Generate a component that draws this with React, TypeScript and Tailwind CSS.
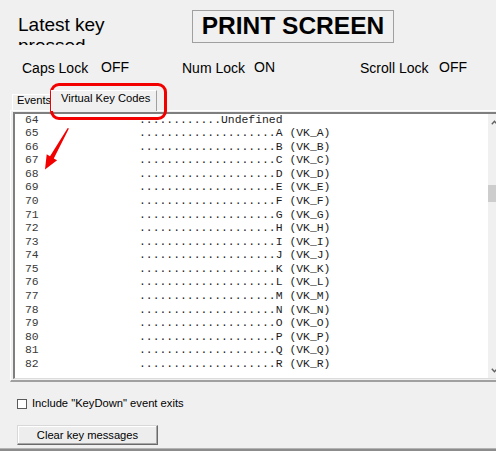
import React from "react";

type Row = { n: number; t: string };

const letters = "ABCDEFGHIJKLMNOPQR".split("");

const rows: Row[] = [
  { n: 64, t: "............Undefined" },
  ...letters.map((c, i) => ({
    n: 65 + i,
    t: "...................." + c + " (VK_" + c + ")",
  })),
];

function ChevronUp() {
  return (
    <svg width="7" height="5" viewBox="0 0 7 5">
      <path d="M0.8 4.2 L3.5 1.3 L6.2 4.2" fill="none" stroke="#606060" strokeWidth="1.4" />
    </svg>
  );
}

function ChevronDown() {
  return (
    <svg width="7" height="5" viewBox="0 0 7 5">
      <path d="M0.8 0.8 L3.5 3.7 L6.2 0.8" fill="none" stroke="#606060" strokeWidth="1.4" />
    </svg>
  );
}

export default function App() {
  return (
    <div className="relative w-[496px] h-[451px] overflow-hidden bg-[#f0f0f0] flex flex-col font-['Liberation_Sans',Arial,sans-serif] text-black">
      {/* header: last key label and big key name box */}
      <div className="flex h-[46px] shrink-0">
        <div className="ml-[18px] mt-[15px] w-[100px] h-[29.5px] overflow-hidden text-[19px] leading-[20.5px]">
          Latest key pressed
        </div>
        <div className="ml-[74px] mt-[10px] w-[202px] h-[33px] border border-[#a0a0a0] flex items-center justify-center">
          <span className="text-[24.5px] font-bold leading-none">PRINT SCREEN</span>
        </div>
      </div>

      {/* lock key states */}
      <div className="flex items-start mt-[13.5px] h-[16px] pl-[22px] text-[14px] leading-[16px] shrink-0">
        <span className="w-[79px]">Caps Lock</span>
        <span className="w-[81px] -mt-px">OFF</span>
        <span className="w-[72px]">Num Lock</span>
        <span className="w-[106px] -mt-px">ON</span>
        <span className="w-[79px]">Scroll Lock</span>
        <span className="-mt-px">OFF</span>
      </div>

      {/* tab control */}
      <div className="mt-[14px] ml-[10px] w-[510px] shrink-0">
        <div className="flex items-end h-[20px] pl-[2px] text-[11.2px]">
          <div className="w-[41px] h-[16px] border-t border-l border-white pl-[4px] leading-[11px]">
            Events
          </div>
          <div className="relative z-10 -ml-[2px] -mb-px w-[106px] h-[21px] bg-[#f0f0f0] border-t border-l border-white border-r border-r-[#a0a0a0] pl-[9px] pt-[2.6px] leading-[11px]">
            Virtual Key Codes
          </div>
        </div>
        <div className="border-t border-l border-white border-b-2 border-b-[#a0a0a0] pt-[1px] pl-[2px] pb-[1px]">
          <div className="w-[492px] border-t-2 border-l-2 border-[#7f7f7f] border-b border-b-[#dcdcdc] bg-white flex h-[267px]">
            <div className="flex-1 h-[264px] overflow-hidden pl-[10px] font-['Liberation_Mono','Courier_New',monospace] text-[11.4px] leading-[13.58px] text-[#1c1c1c]">
              {rows.map((r) => (
                <div key={r.n} className="flex whitespace-pre">
                  <span className="w-[114px] text-[#3a3a3a]">{r.n}</span>
                  <span>{r.t}</span>
                </div>
              ))}
            </div>
            <div className="w-[17px] h-[264px] bg-[#f0f0f0] flex flex-col">
              <div className="h-[12px] flex items-end pl-[3px] pb-[1px]">
                <ChevronUp />
              </div>
              <div className="flex-1">
                <div className="mt-[59px] h-[17px] bg-[#cdcdcd]" />
              </div>
              <div className="h-[14px] flex items-center pl-[3px]">
                <ChevronDown />
              </div>
            </div>
          </div>
        </div>
      </div>

      {/* option checkbox */}
      <div className="flex items-center mt-[15px] h-[13px] pl-[17px] text-[11.2px] leading-[13px] shrink-0">
        <span className="w-[10px] h-[10px] mt-[1px] border border-[#5a5a5a] bg-white" />
        <span className="ml-[5px]">Include "KeyDown" event exits</span>
      </div>

      {/* clear button */}
      <div className="mt-[12px] ml-[17px] shrink-0">
        <button className="w-[141px] h-[20px] bg-[#ededed] border border-t-[#d8d8d8] border-l-[#d8d8d8] border-r-[#6a6a6a] border-b-[#6a6a6a] shadow-[inset_-1px_-1px_0_#a8a8a8,inset_1px_1px_0_#ffffff] text-[11.2px] leading-[13px] text-black">
          Clear key messages
        </button>
      </div>

      <div className="mt-auto h-[3px] border-t border-[#b4b4b4] bg-[#8c8c8c] shrink-0" />

      {/* red callout around the tab and pointer */}
      <div className="absolute left-[50px] top-[83px] w-[117px] h-[37px] rounded-[9px] border-[3.5px] border-[#f20000] pointer-events-none" />
      <svg className="absolute left-0 top-0 pointer-events-none" width="496" height="451" viewBox="0 0 496 451">
        <polygon
          points="68.9,128.6 53.8,158.4 57.1,160.3 45,169.5 46.7,154.3 50.0,156.2 67.7,128.0"
          fill="#f20000"
        />
      </svg>
    </div>
  );
}
